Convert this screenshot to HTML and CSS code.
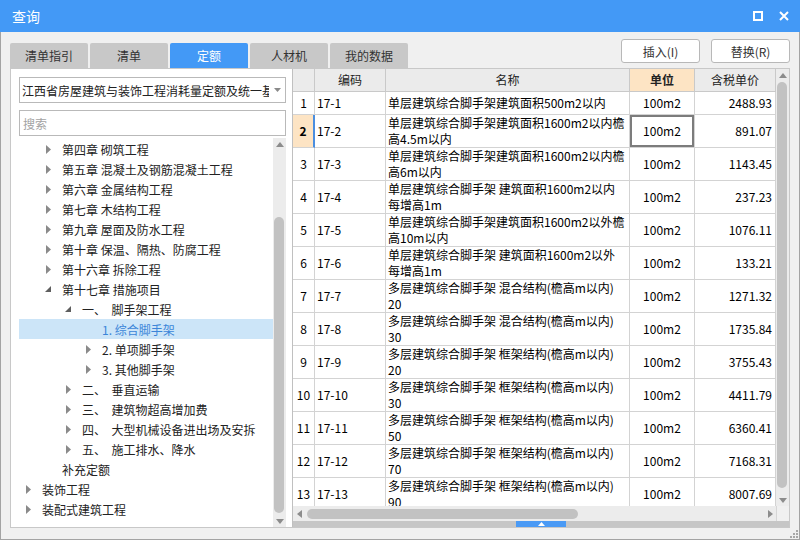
FILE: index.html
```html
<!DOCTYPE html>
<html>
<head>
<meta charset="utf-8">
<title>查询</title>
<link rel="stylesheet" href="styles.css">
</head>
<body>
<div class="window">
  <div class="titlebar">
    <span class="title">查询</span>
    <div class="win-btns">
      <svg width="10" height="10" viewBox="0 0 10 10"><rect x="1" y="1" width="8" height="8" fill="none" stroke="#fff" stroke-width="2"/></svg>
      <svg width="10" height="10" viewBox="0 0 10 10"><path d="M1 1 L9 9 M9 1 L1 9" stroke="#fff" stroke-width="2" fill="none"/></svg>
    </div>
  </div>

  <div class="toolbar">
    <div class="tabs">
      <div class="tab">清单指引</div>
      <div class="tab">清单</div>
      <div class="tab active">定额</div>
      <div class="tab">人材机</div>
      <div class="tab">我的数据</div>
    </div>
    <div class="actions">
      <button class="btn">插入(I)</button>
      <button class="btn">替换(R)</button>
    </div>
  </div>

  <div class="content">
    <div class="left">
      <div class="select">
        <span class="select-text">江西省房屋建筑与装饰工程消耗量定额及统一基价表(2017)</span>
        <span class="caret"><svg width="7" height="4" viewBox="0 0 7 4"><path d="M0 0 H7 L3.5 4 Z" fill="#8a8a8a"/></svg></span>
      </div>
      <div class="search">搜索</div>
      <div class="tree">
        <div class="tree-list">
          <div class="trow l1"><span class="tw"><svg class="ar" width="5" height="9" viewBox="0 0 5 9"><path d="M0 0 L5 4.5 L0 9 Z"/></svg></span><span>第四章 砌筑工程</span></div>
          <div class="trow l1"><span class="tw"><svg class="ar" width="5" height="9" viewBox="0 0 5 9"><path d="M0 0 L5 4.5 L0 9 Z"/></svg></span><span>第五章 混凝土及钢筋混凝土工程</span></div>
          <div class="trow l1"><span class="tw"><svg class="ar" width="5" height="9" viewBox="0 0 5 9"><path d="M0 0 L5 4.5 L0 9 Z"/></svg></span><span>第六章 金属结构工程</span></div>
          <div class="trow l1"><span class="tw"><svg class="ar" width="5" height="9" viewBox="0 0 5 9"><path d="M0 0 L5 4.5 L0 9 Z"/></svg></span><span>第七章 木结构工程</span></div>
          <div class="trow l1"><span class="tw"><svg class="ar" width="5" height="9" viewBox="0 0 5 9"><path d="M0 0 L5 4.5 L0 9 Z"/></svg></span><span>第九章 屋面及防水工程</span></div>
          <div class="trow l1"><span class="tw"><svg class="ar" width="5" height="9" viewBox="0 0 5 9"><path d="M0 0 L5 4.5 L0 9 Z"/></svg></span><span>第十章 保温、隔热、防腐工程</span></div>
          <div class="trow l1"><span class="tw"><svg class="ar" width="5" height="9" viewBox="0 0 5 9"><path d="M0 0 L5 4.5 L0 9 Z"/></svg></span><span>第十六章 拆除工程</span></div>
          <div class="trow l1"><span class="tw"><svg class="ex" width="6" height="6" viewBox="0 0 6 6"><path d="M6 0 L6 6 L0 6 Z"/></svg></span><span>第十七章 措施项目</span></div>
          <div class="trow l2"><span class="tw"><svg class="ex" width="6" height="6" viewBox="0 0 6 6"><path d="M6 0 L6 6 L0 6 Z"/></svg></span><span>一、&nbsp;&nbsp;脚手架工程</span></div>
          <div class="trow l3 sel"><span class="tw"></span><span>1.&nbsp;综合脚手架</span></div>
          <div class="trow l3"><span class="tw"><svg class="ar" width="5" height="9" viewBox="0 0 5 9"><path d="M0 0 L5 4.5 L0 9 Z"/></svg></span><span>2.&nbsp;单项脚手架</span></div>
          <div class="trow l3"><span class="tw"><svg class="ar" width="5" height="9" viewBox="0 0 5 9"><path d="M0 0 L5 4.5 L0 9 Z"/></svg></span><span>3.&nbsp;其他脚手架</span></div>
          <div class="trow l2"><span class="tw"><svg class="ar" width="5" height="9" viewBox="0 0 5 9"><path d="M0 0 L5 4.5 L0 9 Z"/></svg></span><span>二、&nbsp;&nbsp;垂直运输</span></div>
          <div class="trow l2"><span class="tw"><svg class="ar" width="5" height="9" viewBox="0 0 5 9"><path d="M0 0 L5 4.5 L0 9 Z"/></svg></span><span>三、&nbsp;&nbsp;建筑物超高增加费</span></div>
          <div class="trow l2"><span class="tw"><svg class="ar" width="5" height="9" viewBox="0 0 5 9"><path d="M0 0 L5 4.5 L0 9 Z"/></svg></span><span>四、&nbsp;&nbsp;大型机械设备进出场及安拆</span></div>
          <div class="trow l2"><span class="tw"><svg class="ar" width="5" height="9" viewBox="0 0 5 9"><path d="M0 0 L5 4.5 L0 9 Z"/></svg></span><span>五、&nbsp;&nbsp;施工排水、降水</span></div>
          <div class="trow l1"><span class="tw"></span><span>补充定额</span></div>
          <div class="trow l0"><span class="tw"><svg class="ar" width="5" height="9" viewBox="0 0 5 9"><path d="M0 0 L5 4.5 L0 9 Z"/></svg></span><span>装饰工程</span></div>
          <div class="trow l0"><span class="tw"><svg class="ar" width="5" height="9" viewBox="0 0 5 9"><path d="M0 0 L5 4.5 L0 9 Z"/></svg></span><span>装配式建筑工程</span></div>
        </div>
        <div class="tscroll">
          <div class="sarrow up"><svg width="8" height="5" viewBox="0 0 8 5"><path d="M0 5 L4 0 L8 5 Z" fill="#8c8c8c"/></svg></div>
          <div class="tthumb"></div>
          <div class="sfill"></div>
          <div class="sarrow down"><svg width="8" height="5" viewBox="0 0 8 5"><path d="M0 0 L8 0 L4 5 Z" fill="#8c8c8c"/></svg></div>
        </div>
      </div>
    </div>

    <div class="gridpane">
      <div class="grid-main">
        <div class="grid-view">
          <div class="grid">
            <div class="c h"></div><div class="c h">编码</div><div class="c h">名称</div><div class="c h hunit">单位</div><div class="c h">含税单价</div>

            <div class="c n">1</div><div class="c code">17-1</div><div class="c name"><span>单层建筑综合脚手架建筑面积500m2以内</span></div><div class="c unit">100m2</div><div class="c price">2488.93</div>

            <div class="c n cur">2</div><div class="c code">17-2</div><div class="c name"><span>单层建筑综合脚手架建筑面积1600m2以内檐<br>高4.5m以内</span></div><div class="c unit selcell">100m2</div><div class="c price">891.07</div>

            <div class="c n">3</div><div class="c code">17-3</div><div class="c name"><span>单层建筑综合脚手架建筑面积1600m2以内檐<br>高6m以内</span></div><div class="c unit">100m2</div><div class="c price">1143.45</div>

            <div class="c n">4</div><div class="c code">17-4</div><div class="c name"><span>单层建筑综合脚手架 建筑面积1600m2以内<br>每增高1m</span></div><div class="c unit">100m2</div><div class="c price">237.23</div>

            <div class="c n">5</div><div class="c code">17-5</div><div class="c name"><span>单层建筑综合脚手架建筑面积1600m2以外檐<br>高10m以内</span></div><div class="c unit">100m2</div><div class="c price">1076.11</div>

            <div class="c n">6</div><div class="c code">17-6</div><div class="c name"><span>单层建筑综合脚手架 建筑面积1600m2以外<br>每增高1m</span></div><div class="c unit">100m2</div><div class="c price">133.21</div>

            <div class="c n">7</div><div class="c code">17-7</div><div class="c name"><span>多层建筑综合脚手架 混合结构(檐高m以内)<br>20</span></div><div class="c unit">100m2</div><div class="c price">1271.32</div>

            <div class="c n">8</div><div class="c code">17-8</div><div class="c name"><span>多层建筑综合脚手架 混合结构(檐高m以内)<br>30</span></div><div class="c unit">100m2</div><div class="c price">1735.84</div>

            <div class="c n">9</div><div class="c code">17-9</div><div class="c name"><span>多层建筑综合脚手架 框架结构(檐高m以内)<br>20</span></div><div class="c unit">100m2</div><div class="c price">3755.43</div>

            <div class="c n">10</div><div class="c code">17-10</div><div class="c name"><span>多层建筑综合脚手架 框架结构(檐高m以内)<br>30</span></div><div class="c unit">100m2</div><div class="c price">4411.79</div>

            <div class="c n">11</div><div class="c code">17-11</div><div class="c name"><span>多层建筑综合脚手架 框架结构(檐高m以内)<br>50</span></div><div class="c unit">100m2</div><div class="c price">6360.41</div>

            <div class="c n">12</div><div class="c code">17-12</div><div class="c name"><span>多层建筑综合脚手架 框架结构(檐高m以内)<br>70</span></div><div class="c unit">100m2</div><div class="c price">7168.31</div>

            <div class="c n">13</div><div class="c code">17-13</div><div class="c name"><span>多层建筑综合脚手架 框架结构(檐高m以内)<br>90</span></div><div class="c unit">100m2</div><div class="c price">8007.69</div>
          </div>
        </div>
        <div class="gscroll">
          <div class="sarrow up"><svg width="8" height="5" viewBox="0 0 8 5"><path d="M0 5 L4 0 L8 5 Z" fill="#8c8c8c"/></svg></div>
          <div class="gthumb"></div>
          <div class="sfill"></div>
          <div class="sarrow down"><svg width="8" height="5" viewBox="0 0 8 5"><path d="M0 0 L8 0 L4 5 Z" fill="#8c8c8c"/></svg></div>
        </div>
      </div>
      <div class="hrow">
        <div class="hscroll">
          <div class="harrow"><svg width="5" height="8" viewBox="0 0 5 8"><path d="M5 0 L5 8 L0 4 Z" fill="#8c8c8c"/></svg></div>
          <div class="hthumb"></div>
          <div class="sfill"></div>
          <div class="harrow"><svg width="5" height="8" viewBox="0 0 5 8"><path d="M0 0 L5 4 L0 8 Z" fill="#8c8c8c"/></svg></div>
        </div>
        <div class="corner"></div>
      </div>
      <div class="splitter">
        <div class="handle"><svg width="7" height="4" viewBox="0 0 7 4"><path d="M0 4 L3.5 0 L7 4 Z" fill="#fff"/></svg></div>
      </div>
    </div>
  </div>

  <div class="status">
    <svg width="9" height="9" viewBox="0 0 9 9" fill="#a8a8a8">
      <rect x="7" y="1" width="2" height="2"/>
      <rect x="4" y="4" width="2" height="2"/><rect x="7" y="4" width="2" height="2"/>
      <rect x="1" y="7" width="2" height="2"/><rect x="4" y="7" width="2" height="2"/><rect x="7" y="7" width="2" height="2"/>
    </svg>
  </div>
</div>
</body>
</html>
```

FILE: styles.css
```css
* { box-sizing: border-box; }
html, body { margin: 0; padding: 0; }
body {
  width: 800px;
  height: 540px;
  overflow: hidden;
  background: #f0f0f0;
  font-family: "Noto Sans CJK SC", "Noto Sans", sans-serif;
  font-size: 12px;
  color: #222;
}

.window {
  width: 800px;
  height: 540px;
  border: 1px solid #a3a3a3;
  border-top: none;
  display: flex;
  flex-direction: column;
  background: #f0f0f0;
}

/* title bar */
.titlebar {
  flex: none;
  height: 32px;
  margin: 0 -1px;
  background: #4399f6;
  display: flex;
  align-items: center;
  padding: 0 11px 0 12px;
}
.title { flex: 1; color: #fff; font-size: 14px; }
.win-btns { display: flex; align-items: center; gap: 16px; }
.win-btns svg { display: block; }

/* tabs + buttons */
.toolbar {
  flex: none;
  height: 36px;
  display: flex;
  justify-content: space-between;
  padding: 0 9px;
}
.tabs { display: flex; gap: 2px; align-self: flex-end; }
.tab {
  width: 78px;
  height: 25px;
  background: #c8c8c8;
  border-radius: 2px 2px 0 0;
  display: flex;
  align-items: center;
  justify-content: center;
  color: #333;
}
.tab.active { background: #4399f6; color: #fff; }
.actions { display: flex; gap: 11px; padding-top: 7px; }
.btn {
  width: 79px;
  height: 24px;
  padding: 0;
  background: #fff;
  border: 1px solid #b8b8b8;
  border-radius: 3px;
  font-family: inherit;
  font-size: 12px;
  color: #333;
}

/* main content */
.content {
  flex: none;
  height: 460px;
  margin: 0 9px;
  border: 1px solid #c8c8c8;
  background: #fff;
  display: flex;
}

/* left pane */
.left {
  width: 281px;
  flex: none;
  padding: 8px 6px 0 8px;
  display: flex;
  flex-direction: column;
}
.select {
  height: 26px;
  flex: none;
  border: 1px solid #b9b9b9;
  display: flex;
  align-items: center;
  padding-left: 2px;
}
.select-text {
  flex: 1;
  min-width: 0;
  white-space: nowrap;
  overflow: hidden;
  color: #222;
}
.caret { width: 16px; flex: none; display: flex; justify-content: center; }
.caret svg { display: block; }
.search {
  height: 26px;
  flex: none;
  margin-top: 7px;
  border: 1px solid #b9b9b9;
  padding-left: 3px;
  display: flex;
  align-items: center;
  color: #a3a3a3;
}
.tree { flex: 1; min-height: 0; margin-top: 2px; display: flex; }
.tree-list { flex: 1; min-width: 0; padding-top: 1px; overflow: hidden; }
.trow {
  height: 20px;
  display: flex;
  align-items: center;
  white-space: nowrap;
  color: #222;
}
.trow.sel { background: #cce5f8; color: #3b85d8; }
.tw {
  width: 12px;
  flex: none;
  margin-right: 8px;
  display: flex;
  justify-content: center;
  align-items: center;
}
.tw svg { display: block; }
.ar { fill: #8a8a8a; }
.ex { fill: #5e5e5e; }
.l0 { padding-left: 3px; }
.l1 { padding-left: 23px; }
.l2 { padding-left: 43px; }
.l3 { padding-left: 63px; }

/* scrollbars */
.tscroll, .gscroll {
  width: 13px;
  flex: none;
  background: #ececec;
  display: flex;
  flex-direction: column;
}
.sarrow { height: 12px; flex: none; display: flex; align-items: center; justify-content: center; }
.sarrow svg { display: block; }
.sfill { flex: 1; }
.tthumb {
  flex: none;
  margin: 67px 2px 0 1px;
  height: 296px;
  border-radius: 5px;
  background: #c2c2c2;
}
.gthumb {
  flex: none;
  margin: 1px 2px 0 1px;
  height: 406px;
  border-radius: 5px;
  background: #c2c2c2;
}

/* grid pane */
.gridpane {
  flex: 1;
  min-width: 0;
  border-left: 1px solid #c0c0c0;
  display: flex;
  flex-direction: column;
}
.grid-main { height: 437px; flex: none; display: flex; }
.grid-view { flex: 1; min-width: 0; overflow: hidden; }
.grid {
  display: grid;
  grid-template-columns: 22px 71px 244px 65px 81px;
  grid-template-rows: 23px 23px;
  grid-auto-rows: 33px;
  font-family: "Noto Sans CJK SC", "Noto Sans", sans-serif;
  font-size: 12px;
  color: #000;
}
.c {
  border-right: 1px solid #d3d3d3;
  border-bottom: 1px solid #d3d3d3;
  display: flex;
  align-items: center;
  overflow: hidden;
  white-space: nowrap;
  line-height: 16px;
}
.h {
  background: #ebebeb;
  justify-content: center;
  border-color: #c9c9c9;
  color: #222;
}
.hunit { background: #fde4c4; font-weight: bold; }
.n { justify-content: center; }
.n.cur { background: #fde4c4; font-weight: bold; border-right: 2px solid #4a8ee0; }
.code { padding-left: 2px; }
.name { padding-left: 2px; }
.unit { justify-content: center; }
.price { justify-content: flex-end; padding-right: 3px; }
.selcell { box-shadow: inset 0 0 0 2px #7c7c7c; }

/* horizontal scrollbar */
.hrow { height: 15px; flex: none; display: flex; background: #ececec; }
.hscroll { width: 483px; flex: none; display: flex; align-items: center; }
.harrow { width: 12px; flex: none; display: flex; justify-content: center; align-items: center; }
.harrow svg { display: block; }
.hthumb {
  flex: none;
  width: 271px;
  height: 10px;
  margin-left: 2px;
  border-radius: 5px;
  background: #c2c2c2;
}
.corner { flex: 1; border-left: 1px solid #d6d6d6; background: #f0f0f0; }

/* splitter */
.splitter { height: 6px; flex: none; background: #c6c6c6; display: flex; justify-content: center; }
.handle { width: 50px; background: #4a9af5; display: flex; align-items: center; justify-content: center; }
.handle svg { display: block; }

/* bottom strip */
.status {
  flex: 1;
  display: flex;
  justify-content: flex-end;
  align-items: flex-end;
  padding: 0 1px 1px 0;
}
.status svg { display: block; }
```
